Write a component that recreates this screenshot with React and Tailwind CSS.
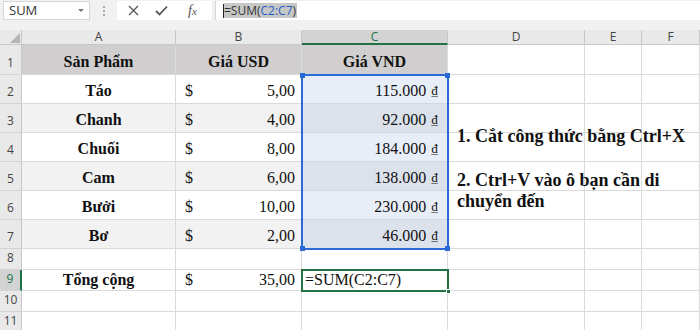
const UI = { fontFamily: '"Open Sans", "Noto Sans", sans-serif' };
const SERIF = { fontFamily: '"Liberation Serif", "Times New Roman", serif' };

const DATA = [
  { n: 2, name: 'Táo', usd: '5,00', vnd: '115.000' },
  { n: 3, name: 'Chanh', usd: '4,00', vnd: '92.000' },
  { n: 4, name: 'Chuối', usd: '8,00', vnd: '184.000' },
  { n: 5, name: 'Cam', usd: '6,00', vnd: '138.000' },
  { n: 6, name: 'Bưởi', usd: '10,00', vnd: '230.000' },
  { n: 7, name: 'Bơ', usd: '2,00', vnd: '46.000' },
];

function RowHead({ n, active }) {
  return (
    <div
      style={UI}
      className={`flex items-end justify-center pb-[2px] text-[12px] border-b border-[#d4d4d4] ${
        active
          ? 'bg-[#d3d3d3] text-[#217346] border-r-2 border-r-[#217346]'
          : 'bg-[#e9e9e9] text-[#444] border-r border-r-[#c8c8c8]'
      }`}
    >
      {n}
    </div>
  );
}

function Blank({ bg = 'bg-white' }) {
  return <div className={`${bg} border-r border-b border-[#dadada]`} />;
}

function FormulaBar() {
  return (
    <div style={UI} className="h-[30px] bg-[#f1f1f1] flex items-start pt-[1px] pl-[3px] gap-0">
      <div className="w-[87px] h-[19px] bg-white border border-[#d6d6d6] flex items-center justify-between pl-[5px] pr-[5px]">
        <span className="text-[13px] text-[#333] leading-none">SUM</span>
        <span className="w-0 h-0 border-l-[3px] border-r-[3px] border-t-[3px] border-l-transparent border-r-transparent border-t-[#777]" />
      </div>
      <div className="w-[27px] h-[19px] flex flex-col items-center justify-center gap-[2px]">
        <span className="w-[2px] h-[2px] bg-[#a8a8a8]" />
        <span className="w-[2px] h-[2px] bg-[#a8a8a8]" />
        <span className="w-[2px] h-[2px] bg-[#a8a8a8]" />
      </div>
      <div className="w-[95px] h-[19px] bg-white flex items-center pl-[11px] gap-[16px]">
        <svg width="11" height="11" viewBox="0 0 11 11" className="text-[#555]">
          <path d="M1 1 L10 10 M10 1 L1 10" stroke="currentColor" strokeWidth="1.3" fill="none" />
        </svg>
        <svg width="13" height="11" viewBox="0 0 13 11" className="text-[#555]">
          <path d="M1 6 L4.5 9.5 L12 1.5" stroke="currentColor" strokeWidth="1.8" fill="none" />
        </svg>
        <span style={SERIF} className="italic text-[14px] text-[#555] leading-none ml-[4px]">
          f<span className="text-[11px]">x</span>
        </span>
      </div>
      <div className="ml-[3px] flex-1 h-[19px] bg-white border-l border-[#d6d6d6] flex items-center pl-[7px]">
        <span className="w-[1px] h-[14px] bg-[#222]" />
        <span className="bg-[#c7c7c7] text-[12px] text-[#333] leading-[15px] pr-[1px]">
          =SUM(<span className="text-[#1f5fc4]">C2:C7</span>)
        </span>
      </div>
    </div>
  );
}

export default function App() {
  const cols = ['A', 'B', 'C', 'D', 'E', 'F'];
  return (
    <div className="w-[700px] h-[330px] overflow-hidden bg-white relative">
      <FormulaBar />

      <div className="relative grid grid-cols-[22px_154px_126px_146px_137px_57px_58px] grid-rows-[15px_30px_29px_29px_29px_29px_29px_29px_21px_21px_21px_21px]">
        {/* column headers */}
        <div className="bg-[#e9e9e9] border-r border-b border-[#c8c8c8] flex items-end justify-end pr-[1px] pb-[1px]">
          <svg width="10" height="10" viewBox="0 0 10 10">
            <path d="M10 0 L10 10 L0 10 Z" fill="#b5b5b5" />
          </svg>
        </div>
        {cols.map((c) => (
          <div
            key={c}
            style={UI}
            className={`flex items-center justify-center text-[12px] border-r border-r-[#c8c8c8] ${
              c === 'C'
                ? 'bg-[#d3d3d3] text-[#217346] border-b-2 border-b-[#217346]'
                : 'bg-[#e9e9e9] text-[#444] border-b border-b-[#c8c8c8]'
            }`}
          >
            {c}
          </div>
        ))}

        {/* row 1 */}
        <RowHead n={1} />
        {['Sản Phẩm', 'Giá USD', 'Giá VND'].map((t) => (
          <div
            key={t}
            style={SERIF}
            className="bg-[#d0cece] border-r border-b border-[#dadada] flex items-end justify-center pb-[2px] text-[16px] font-bold text-[#111] leading-[20px]"
          >
            {t}
          </div>
        ))}
        <Blank />
        <Blank />
        <Blank />

        {/* rows 2-7 */}
        {DATA.map((r, i) => {
          const alt = i % 2 === 1;
          return [
            <RowHead key={`h${r.n}`} n={r.n} />,
            <div
              key={`a${r.n}`}
              style={SERIF}
              className={`${alt ? 'bg-[#f2f2f2]' : 'bg-white'} border-r border-b border-[#dadada] flex items-end justify-center pb-[2px] text-[16px] font-bold text-[#111] leading-[20px]`}
            >
              {r.name}
            </div>,
            <div
              key={`b${r.n}`}
              style={SERIF}
              className={`${alt ? 'bg-[#f2f2f2]' : 'bg-white'} border-r border-b border-[#dadada] flex items-end justify-between pl-[9px] pr-[6px] pb-[2px] text-[16px] text-[#111] leading-[20px]`}
            >
              <span>$</span>
              <span>{r.usd}</span>
            </div>,
            <div
              key={`c${r.n}`}
              style={SERIF}
              className={`${alt ? 'bg-[#dce2ec]' : 'bg-[#e8eef8]'} border-r border-b border-[#cfd6e2] flex items-end justify-end pr-[9px] pb-[2px] text-[16px] text-[#111] leading-[20px]`}
            >
              {r.vnd} <span className="ml-[5px] text-[13px]">₫</span>
            </div>,
            <Blank key={`d${r.n}`} />,
            <Blank key={`e${r.n}`} />,
            <Blank key={`f${r.n}`} />,
          ];
        })}

        {/* row 8 */}
        <RowHead n={8} />
        {cols.map((c) => (
          <Blank key={`8${c}`} />
        ))}

        {/* row 9 */}
        <RowHead n={9} active />
        <div
          style={SERIF}
          className="bg-white border-r border-b border-[#dadada] flex items-end justify-center pb-[1px] text-[16px] font-bold text-[#111] leading-[19px]"
        >
          Tổng cộng
        </div>
        <div
          style={SERIF}
          className="bg-white border-r border-b border-[#dadada] flex items-end justify-between pl-[9px] pr-[6px] pb-[1px] text-[16px] text-[#111] leading-[19px]"
        >
          <span>$</span>
          <span>35,00</span>
        </div>
        <div
          style={SERIF}
          className="bg-white border-r border-b border-[#dadada] flex items-end pl-[3px] pb-[1px] text-[16px] text-[#111] leading-[19px]"
        >
          =SUM(C2:C7)
        </div>
        <Blank />
        <Blank />
        <Blank />

        {/* rows 10-11 */}
        {[10, 11].map((n) => [
          <RowHead key={`h${n}`} n={n} />,
          ...cols.map((c) => <Blank key={`${n}${c}`} />),
        ])}

        {/* range highlight C2:C7 */}
        <div className="absolute left-[301px] top-[44px] w-[148px] h-[176px] border-2 border-[#2a6ad6] pointer-events-none">
          <span className="absolute -left-[3px] -top-[3px] w-[5px] h-[5px] bg-[#2a6ad6]" />
          <span className="absolute -right-[3px] -top-[3px] w-[5px] h-[5px] bg-[#2a6ad6]" />
          <span className="absolute -left-[3px] -bottom-[3px] w-[5px] h-[5px] bg-[#2a6ad6]" />
          <span className="absolute -right-[3px] -bottom-[3px] w-[5px] h-[5px] bg-[#2a6ad6]" />
        </div>

        {/* active cell C9 */}
        <div className="absolute left-[301px] top-[239px] w-[148px] h-[23px] border-2 border-[#217346] pointer-events-none">
          <span className="absolute -right-[4px] -bottom-[4px] w-[5px] h-[5px] bg-[#217346] border border-white" />
        </div>
      </div>

      {/* notes over column D */}
      <div style={SERIF} className="absolute left-[457px] top-[125px] text-[18px] font-bold text-[#111] leading-[22px]">
        1. Cắt công thức bằng Ctrl+X
      </div>
      <div style={SERIF} className="absolute left-[457px] top-[170px] text-[18px] font-bold text-[#111] leading-[21px]">
        2. Ctrl+V vào ô bạn cần di
        <br />
        chuyển đến
      </div>
    </div>
  );
}
